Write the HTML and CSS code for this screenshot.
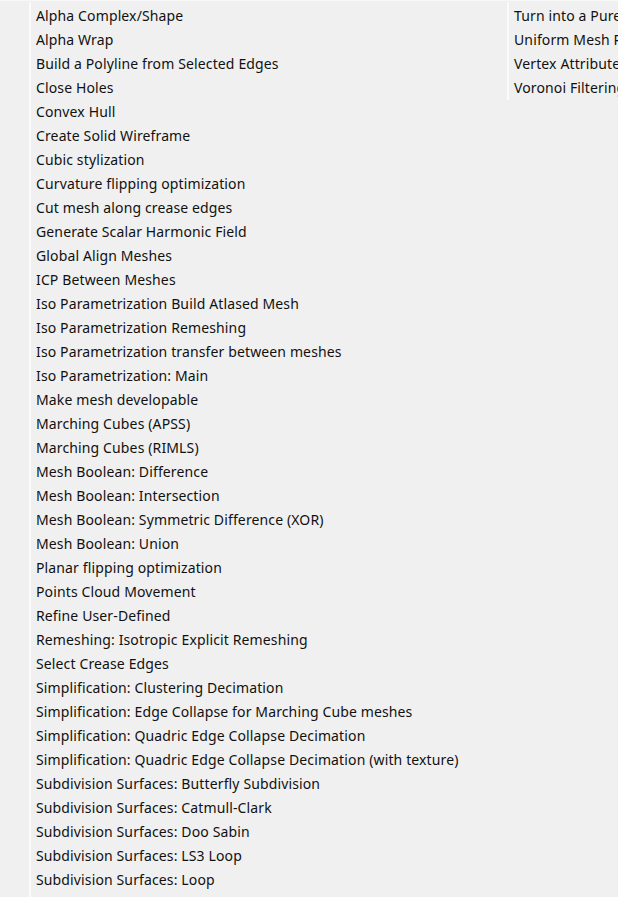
FILE: index.html
```html
<!DOCTYPE html>
<html>
<head>
<meta charset="utf-8">
<link rel="stylesheet" href="styles.css">
</head>
<body>
<div class="menu">
  <div class="col col-main">
    <div class="gutter"></div>
    <ul class="items">
      <li>Alpha Complex/Shape</li>
      <li>Alpha Wrap</li>
      <li>Build a Polyline from Selected Edges</li>
      <li>Close Holes</li>
      <li>Convex Hull</li>
      <li>Create Solid Wireframe</li>
      <li>Cubic stylization</li>
      <li>Curvature flipping optimization</li>
      <li>Cut mesh along crease edges</li>
      <li>Generate Scalar Harmonic Field</li>
      <li>Global Align Meshes</li>
      <li>ICP Between Meshes</li>
      <li>Iso Parametrization Build Atlased Mesh</li>
      <li>Iso Parametrization Remeshing</li>
      <li>Iso Parametrization transfer between meshes</li>
      <li>Iso Parametrization: Main</li>
      <li>Make mesh developable</li>
      <li>Marching Cubes (APSS)</li>
      <li>Marching Cubes (RIMLS)</li>
      <li>Mesh Boolean: Difference</li>
      <li>Mesh Boolean: Intersection</li>
      <li>Mesh Boolean: Symmetric Difference (XOR)</li>
      <li>Mesh Boolean: Union</li>
      <li>Planar flipping optimization</li>
      <li>Points Cloud Movement</li>
      <li>Refine User-Defined</li>
      <li>Remeshing: Isotropic Explicit Remeshing</li>
      <li>Select Crease Edges</li>
      <li>Simplification: Clustering Decimation</li>
      <li>Simplification: Edge Collapse for Marching Cube meshes</li>
      <li>Simplification: Quadric Edge Collapse Decimation</li>
      <li>Simplification: Quadric Edge Collapse Decimation (with texture)</li>
      <li>Subdivision Surfaces: Butterfly Subdivision</li>
      <li>Subdivision Surfaces: Catmull-Clark</li>
      <li>Subdivision Surfaces: Doo Sabin</li>
      <li>Subdivision Surfaces: LS3 Loop</li>
      <li>Subdivision Surfaces: Loop</li>
    </ul>
  </div>
  <div class="col col-side">
    <div class="gutter"></div>
    <ul class="items">
      <li>Turn into a Pure-Triangular mesh</li>
      <li>Uniform Mesh Resampling</li>
      <li>Vertex Attribute Transfer</li>
      <li>Voronoi Filtering</li>
    </ul>
  </div>
</div>
</body>
</html>
```

FILE: styles.css
```css
html, body {
  margin: 0;
  padding: 0;
  background: #f0f0f0;
  overflow: hidden;
}
.menu {
  display: flex;
  align-items: flex-start;
  border-top: 1px solid #f8f8f8;
  height: 896px;
  font-family: "Noto Sans", "Open Sans", sans-serif;
  font-size: 14px;
  letter-spacing: 0.13px;
  color: #111;
}
.col {
  display: flex;
  align-items: stretch;
  flex: none;
}
.col-main {
  width: 478px;
  height: 896px;
}
.col-side {
  height: 99px;
  width: 140px;
  overflow: hidden;
}
.gutter {
  width: 29px;
  flex: none;
  border-right: 2px solid #fbfbfb;
  margin-top: 1px;
}
.items {
  list-style: none;
  margin: 0;
  padding: 3px 0 0 5px;
}
.items li {
  height: 24px;
  line-height: 24px;
  white-space: nowrap;
}
```
